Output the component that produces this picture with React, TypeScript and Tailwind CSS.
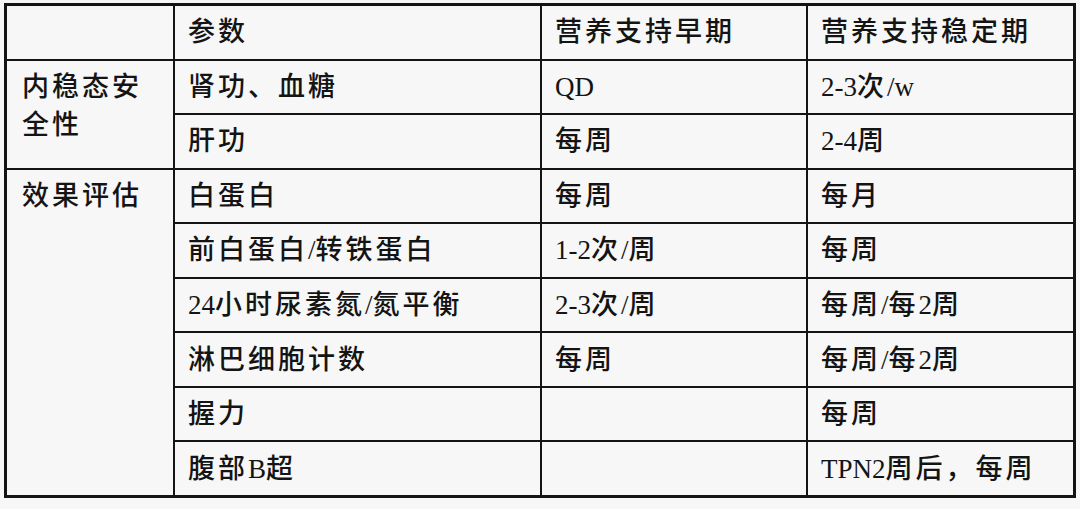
const rows: [string, string, string][] = [
  ["肾功、血糖", "QD", "2-3次/w"],
  ["肝功", "每周", "2-4周"],
  ["白蛋白", "每周", "每月"],
  ["前白蛋白/转铁蛋白", "1-2次/周", "每周"],
  ["24小时尿素氮/氮平衡", "2-3次/周", "每周/每2周"],
  ["淋巴细胞计数", "每周", "每周/每2周"],
  ["握力", "", "每周"],
  ["腹部B超", "", "TPN2周后，每周"],
]

const cell = "bg-[#f7f7f7] flex items-center pl-[13px]"

// Latin runs are set tight, CJK runs keep the wide character spacing
function Txt({ s }: { s: string }) {
  const parts = s.match(/[\x20-\x7e]+|[^\x20-\x7e]+/g) ?? []
  return (
    <span>
      {parts.map((p, i) =>
        /^[\x20-\x7e]+$/.test(p) ? (
          <span key={i} className="tracking-normal font-normal">
            {p}
          </span>
        ) : (
          <span key={i}>{p}</span>
        )
      )}
    </span>
  )
}

export default function App() {
  return (
    <div
      className="w-[1080px] h-[509px] bg-[#f7f7f7] pl-[4px] pt-[3px] text-[27px] leading-[38px] tracking-[3px] font-medium text-[#141414]"
      style={{ fontFamily: '"Liberation Serif", "Noto Sans CJK SC", serif' }}
    >
      <div className="w-[1072px] h-[495px] border-[3px] border-[#141414] bg-[#141414] grid grid-cols-[166px_365px_264px_265px] grid-rows-[repeat(9,1fr)] gap-[2px]">
        {/* Header */}
        <div className={cell}></div>
        <div className={cell}>参数</div>
        <div className={cell}>营养支持早期</div>
        <div className={cell}>营养支持稳定期</div>

        {/* Group labels */}
        <div className="bg-[#f7f7f7] row-start-2 row-span-2 col-start-1 pl-[15px] pt-[7px]">
          内稳态安
          <br />
          全性
        </div>
        <div className="bg-[#f7f7f7] row-start-4 row-span-6 col-start-1 pl-[15px] pt-[7px]">
          效果评估
        </div>

        {rows.map(([param, early, stable], i) => (
          <div key={param} className="contents">
            <div className={cell} style={{ gridRow: i + 2, gridColumn: 2 }}>
              <Txt s={param} />
            </div>
            <div className={cell} style={{ gridRow: i + 2, gridColumn: 3 }}>
              <Txt s={early} />
            </div>
            <div className={cell} style={{ gridRow: i + 2, gridColumn: 4 }}>
              <Txt s={stable} />
            </div>
          </div>
        ))}
      </div>
    </div>
  )
}
